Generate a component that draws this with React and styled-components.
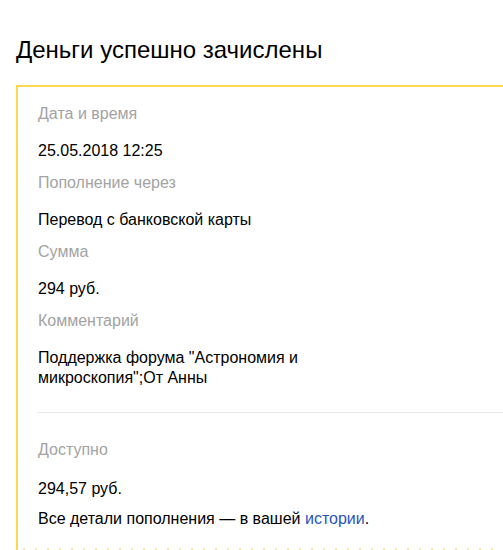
import React from 'react';
import styled, { createGlobalStyle } from 'styled-components';

const Global = createGlobalStyle`
  html, body {
    margin: 0;
    padding: 0;
    background: #fff;
  }
  body {
    font-family: "Liberation Sans", Arial, sans-serif;
    color: #000;
    overflow: hidden;
  }
`;

const Page = styled.div`
  width: 503px;
  height: 550px;
  overflow: hidden;
  padding: 35px 0 0 16px;
  box-sizing: border-box;
`;

const Title = styled.h1`
  margin: 0 0 21px;
  font-size: 24px;
  line-height: 29px;
  font-weight: normal;
`;

const Card = styled.div`
  width: 520px;
  border-top: 2px solid #fdd84f;
  border-left: 2px solid #fdd84f;
  padding: 17px 0 0 20px;
  box-sizing: border-box;
  position: relative;
  height: 470px;
  &::after {
    content: '';
    position: absolute;
    left: 0;
    right: 0;
    bottom: 5px;
    height: 2px;
    background: radial-gradient(circle, #fbe8a6 0.8px, transparent 1.2px) 0 0 / 12px 2px repeat-x;
  }
`;

const Label = styled.div`
  font-size: 16px;
  line-height: 20px;
  color: #a3a3a3;
  margin-bottom: ${(p) => p.$mb ?? 17}px;
`;

const Value = styled.div`
  font-size: 16px;
  line-height: 20px;
  margin-bottom: ${(p) => p.$mb ?? 12}px;
  max-width: ${(p) => (p.$narrow ? '330px' : 'none')};
`;

const Divider = styled.div`
  height: 1px;
  background: #e6e6e6;
  margin: 0 0 27px;
`;

const Link = styled.a`
  color: #2a54c0;
  text-decoration: none;
`;

const rows = [
  ['Дата и время', '25.05.2018 12:25'],
  ['Пополнение через', 'Перевод с банковской карты'],
  ['Сумма', '294 руб.'],
];

export default () => (
  <>
    <Global />
    <Page>
      <Title>Деньги успешно зачислены</Title>
      <Card>
        {rows.map(([label, value]) => (
          <React.Fragment key={label}>
            <Label>{label}</Label>
            <Value>{value}</Value>
          </React.Fragment>
        ))}
        <Label>Комментарий</Label>
        <Value $narrow $mb={24}>
          Поддержка форума "Астрономия и микроскопия";От Анны
        </Value>
        <Divider />
        <Label $mb={19}>Доступно</Label>
        <Value $mb={10}>294,57 руб.</Value>
        <Value>
          Все детали пополнения — в вашей <Link href="#">истории</Link>.
        </Value>
      </Card>
    </Page>
  </>
);
